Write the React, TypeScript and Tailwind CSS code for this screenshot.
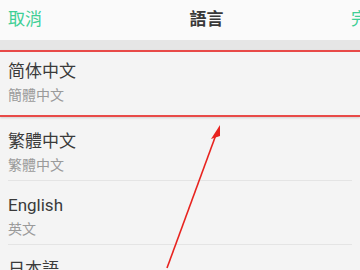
const languages = [
  { name: "简体中文", sub: "簡體中文" },
  { name: "繁體中文", sub: "繁體中文" },
  { name: "English", sub: "英文" },
  { name: "日本語", sub: "日文" },
];

const font = "font-['Roboto','Noto_Sans_CJK_TC',sans-serif]";

export default function App() {
  return (
    <div className={`relative w-[360px] h-[270px] overflow-hidden bg-[#f4f4f4] ${font}`}>
      <div className="h-[40px] bg-[#fafafa] flex items-center justify-between pl-[8px] pr-0">
        <span className="text-[17px] text-[#3ecf95]">取消</span>
        <span className="text-[17px] font-bold text-[#383838] ml-[20px]">語言</span>
        <span className="text-[17px] text-[#3ecf95] w-[9px] overflow-hidden whitespace-nowrap">完成</span>
      </div>
      <div className="h-[10px] bg-[#e6e6e6]" />
      <div className="flex flex-col">
        {languages.map((l, i) => (
          <div
            key={l.name}
            className={
              i === 0
                ? "h-[67px] border-y-2 border-[#e84a48] shadow-[0_1px_2px_rgba(0,0,0,0.15)] px-[8px] pt-[7px]"
                : "h-[64px] px-[8px] pt-[12px]"
            }
          >
            <div className={i === 0 ? "" : "h-full border-b border-[#e4e4e4]"}>
              <div className="text-[17px] leading-[24px] text-[#3a3a3a]">{l.name}</div>
              <div className="text-[14px] leading-[20px] mt-[2px] text-[#9a9a9a]">{l.sub}</div>
            </div>
          </div>
        ))}
      </div>
      <svg className="absolute left-0 top-0" width="360" height="270" viewBox="0 0 360 270">
        <line x1="167" y1="268" x2="217" y2="132" stroke="#e8231f" strokeWidth="1.6" />
        <polygon points="220,125 211,139 220,136" fill="#e8231f" />
      </svg>
    </div>
  );
}
